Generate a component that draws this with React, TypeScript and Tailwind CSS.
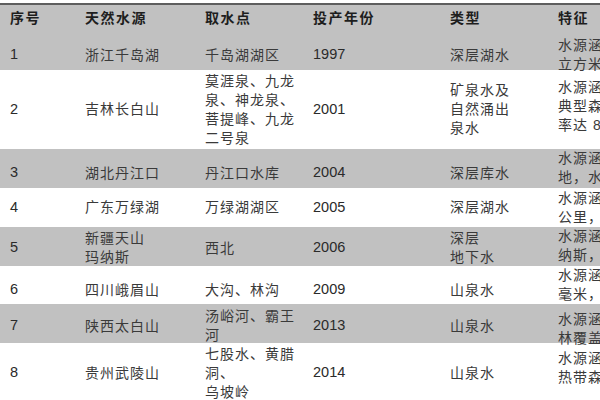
import React from "react";

type Cell = string | string[];
type Row = {
  no: string;
  src: Cell;
  point: Cell;
  year: string;
  type: Cell;
  feat: string[];
  h: string;
  gray: boolean;
  featShift: string;
};

const rows: Row[] = [
  { no: "1", src: "浙江千岛湖", point: "千岛湖湖区", year: "1997", type: "深层湖水", feat: ["水源涵养区面积", "立方米，水质优良"], h: "h-[34px]", gray: true, featShift: "" },
  { no: "2", src: "吉林长白山", point: ["莫涯泉、九龙", "泉、神龙泉、", "菩提峰、九龙", "二号泉"], year: "2001", type: ["矿泉水及", "自然涌出", "泉水"], feat: ["水源涵养区位于", "典型森林生态系统", "率达 80%以上"], h: "h-[79px]", gray: false, featShift: "pb-[6px]" },
  { no: "3", src: "湖北丹江口", point: "丹江口水库", year: "2004", type: "深层库水", feat: ["水源涵养区位于", "地，水质优良"], h: "h-[39px]", gray: true, featShift: "pb-[10px]" },
  { no: "4", src: "广东万绿湖", point: "万绿湖湖区", year: "2005", type: "深层湖水", feat: ["水源涵养区面积", "公里，水质优良"], h: "h-[39px]", gray: false, featShift: "" },
  { no: "5", src: ["新疆天山", "玛纳斯"], point: "西北", year: "2006", type: ["深层", "地下水"], feat: ["水源涵养区位于", "纳斯，水质优良"], h: "h-[39px]", gray: true, featShift: "pb-[4px]" },
  { no: "6", src: "四川峨眉山", point: "大沟、林沟", year: "2009", type: "山泉水", feat: ["水源涵养区年降", "毫米，水质优良"], h: "h-[38px]", gray: false, featShift: "pb-[10px]" },
  { no: "7", src: "陕西太白山", point: ["汤峪河、霸王", "河"], year: "2013", type: "山泉水", feat: ["水源涵养区位于", "林覆盖率高"], h: "h-[39px]", gray: true, featShift: "pt-[6px]" },
  { no: "8", src: "贵州武陵山", point: ["七股水、黄腊", "洞、", "乌坡岭"], year: "2014", type: "山泉水", feat: ["水源涵养区位于", "热带森林地区"], h: "h-[60px]", gray: false, featShift: "pb-[10px]" },
];

function Lines({ c }: { c: Cell }) {
  const arr = Array.isArray(c) ? c : [c];
  return (
    <div className="flex flex-col leading-[19px] whitespace-nowrap">
      {arr.map((l, i) => (
        <span key={i}>{l}</span>
      ))}
    </div>
  );
}

const cjk = "text-[14px] tracking-[1px] text-[#3a3a3a]";
const num = "text-[14.5px] tracking-normal text-[#2a2a2a]";

export default function App() {
  return (
    <div className="w-[600px] h-[400px] overflow-hidden bg-white font-['Liberation_Sans','Noto_Sans_CJK_SC',sans-serif]">
      <div className="h-[3px]" />
      <div className="h-[2px] bg-[#5e5e5e]" />
      <div className="w-[700px]">
        <div className="grid grid-cols-[75px_120px_108px_137px_108px_152px] h-[31px] bg-[#c1c1c1] items-center font-bold text-[14px] tracking-[1.5px] text-[#1e1e1e] pb-[4px]">
          <div className="pl-[10px]">序号</div>
          <div className="pl-[10px]">天然水源</div>
          <div className="pl-[10px]">取水点</div>
          <div className="pl-[10px]">投产年份</div>
          <div className="pl-[10px]">类型</div>
          <div className="pl-[10px]">特征</div>
        </div>
        {rows.map((r) => (
          <div
            key={r.no}
            className={`grid grid-cols-[75px_120px_108px_137px_108px_152px] items-center ${r.h} ${r.gray ? "bg-[#c1c1c1]" : "bg-white"}`}
          >
            <div className={`pl-[10px] ${num}`}>{r.no}</div>
            <div className={`pl-[10px] ${cjk}`}>
              <Lines c={r.src} />
            </div>
            <div className={`pl-[10px] ${cjk}`}>
              <Lines c={r.point} />
            </div>
            <div className={`pl-[10px] ${num}`}>{r.year}</div>
            <div className={`pl-[10px] ${cjk}`}>
              <Lines c={r.type} />
            </div>
            <div className={`pl-[10px] ${cjk} ${r.featShift}`}>
              <Lines c={r.feat} />
            </div>
          </div>
        ))}
      </div>
    </div>
  );
}
